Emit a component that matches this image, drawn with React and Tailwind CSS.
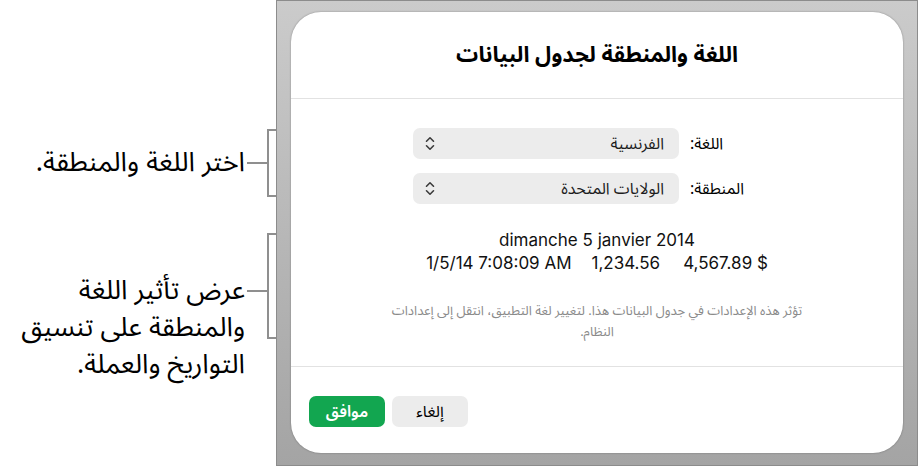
import React from "react";

const arabic = { fontFamily: '"Noto Sans Arabic", "DejaVu Sans", sans-serif' };
const latin = { fontFamily: 'Inter, "Liberation Sans", sans-serif' };

function UpDown() {
  return (
    <svg width="10" height="15" viewBox="0 0 10 15" fill="none" stroke="#3a3a3a" strokeWidth="1.6" strokeLinecap="round" strokeLinejoin="round">
      <path d="M1.5 5.2 L5 1.8 L8.5 5.2" />
      <path d="M1.5 9.8 L5 13.2 L8.5 9.8" />
    </svg>
  );
}

function Bracket({ height }) {
  return (
    <div
      className="w-[9px] shrink-0 border-y-2 border-l-2 border-[#8f8f8f]"
      style={{ height }}
    />
  );
}

function Callouts() {
  return (
    <div className="w-[276px] shrink-0 pt-[129px] text-[27px] text-black" dir="rtl" style={arabic}>
      <div className="flex h-[68px] items-center">
        <Bracket height={68} />
        <div className="mr-[-1px] h-[1.5px] w-[21px] shrink-0 bg-[#8f8f8f]" />
        <div className="whitespace-nowrap pr-[2px]">اختر اللغة والمنطقة.</div>
      </div>
      <div className="mt-[36px] flex items-start">
        <Bracket height={106} />
        <div className="mr-[-1px] mt-[57px] h-[1.5px] w-[21px] shrink-0 bg-[#8f8f8f]" />
        <div className="mt-[39px] whitespace-nowrap pr-[2px] leading-[37px]">
          عرض تأثير اللغة
          <br />
          والمنطقة على تنسيق
          <br />
          التواريخ والعملة.
        </div>
      </div>
    </div>
  );
}

function Select({ value }) {
  return (
    <div className="flex h-[31px] w-[266px] items-center justify-between rounded-[7px] bg-[#ececec] pl-[12px] pr-[15px] text-[16px] text-[#1d1d1d]">
      <span>{value}</span>
      <UpDown />
    </div>
  );
}

function Dialog() {
  return (
    <div
      dir="rtl"
      className="flex h-[441px] w-[612px] flex-col rounded-[30px] bg-white shadow-[0_0_2px_rgba(0,0,0,0.35)]"
      style={arabic}
    >
      <div className="flex h-[87px] items-center justify-center border-b border-[#e2e2e2] text-[22px] font-bold text-black">
        اللغة والمنطقة لجدول البيانات
      </div>

      <div className="flex flex-1 flex-col border-b border-[#e2e2e2]">
        <div className="mt-[29px] grid grid-cols-[62px_266px] items-center gap-x-[11px] gap-y-[14px] self-start pr-[151px]">
          <div className="whitespace-nowrap text-left text-[16px]">اللغة:</div>
          <Select value="الفرنسية" />
          <div className="whitespace-nowrap text-left text-[16px]">المنطقة:</div>
          <Select value="الولايات المتحدة" />
        </div>

        <div dir="ltr" className="mt-[25px] flex flex-col items-center text-[17px] leading-[23px] text-[#111]" style={latin}>
          <div>dimanche 5 janvier 2014</div>
          <div className="flex gap-[20px]">
            <span>1/5/14 7:08:09 AM</span>
            <span>1,234.56</span>
            <span className="ml-[3px]">4,567.89 $</span>
          </div>
        </div>

        <p className="mt-[26px] whitespace-nowrap text-center text-[13px] leading-[21px] text-[#8a8a8a]">
          تؤثر هذه الإعدادات في جدول البيانات هذا. لتغيير لغة التطبيق، انتقل إلى إعدادات
          <br />
          النظام.
        </p>
      </div>

      <div className="flex h-[86px] items-start justify-end gap-[7px] pl-[18px] pt-[29px]">
        <button className="h-[31px] w-[76px] rounded-[7px] bg-[#ececec] text-[16px] text-black">إلغاء</button>
        <button className="h-[31px] w-[76px] rounded-[7px] bg-[#12a650] text-[16px] font-semibold text-white">موافق</button>
      </div>
    </div>
  );
}

export default function App() {
  return (
    <div className="flex h-[467px] w-[918px] overflow-hidden bg-white">
      <Callouts />
      <div className="flex h-[466px] w-[642px] items-start border border-[#8c8c8c] bg-gradient-to-b from-[#cbcbcb] to-[#a4a4a4] pl-[14px] pt-[11px]">
        <Dialog />
      </div>
    </div>
  );
}
